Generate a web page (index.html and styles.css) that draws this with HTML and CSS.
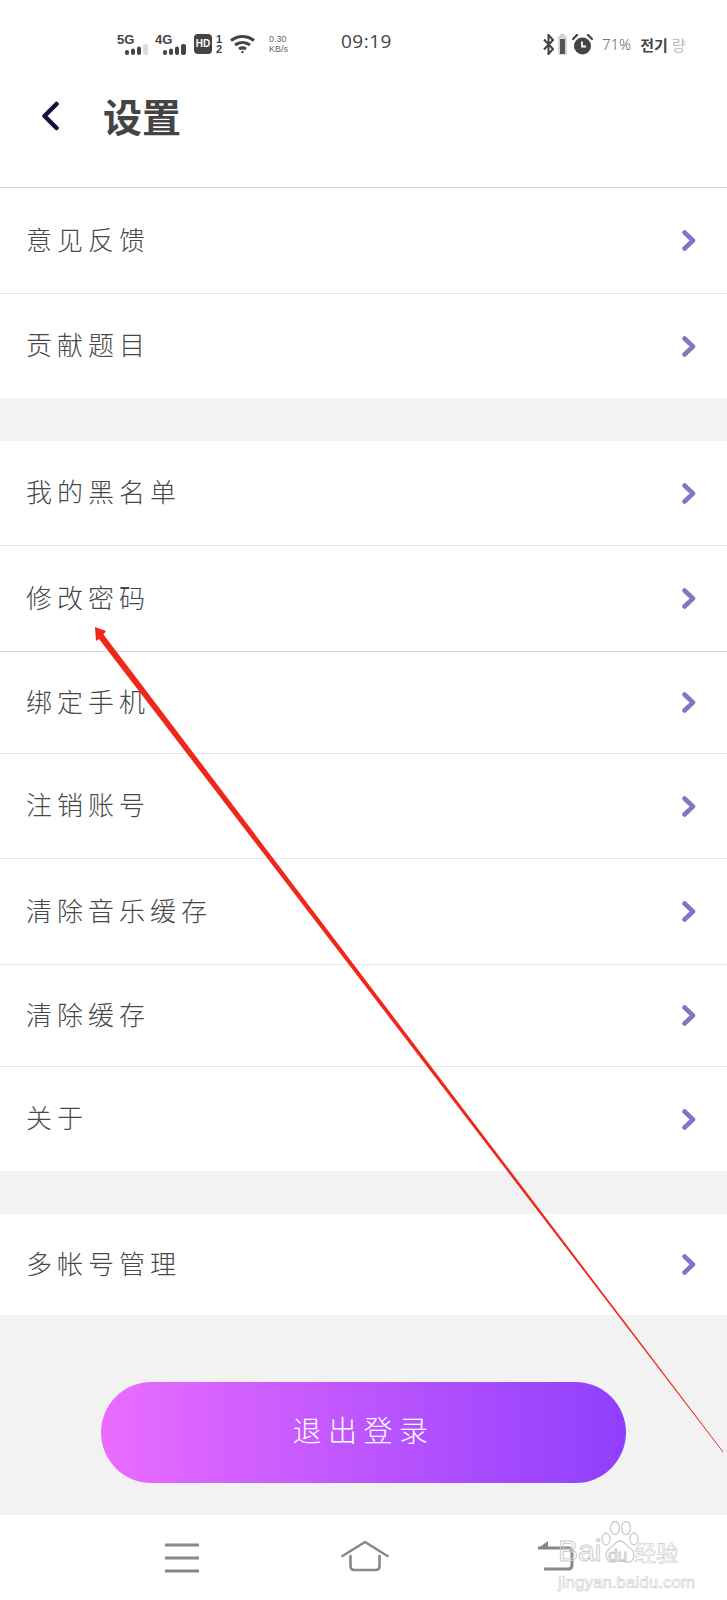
FILE: index.html
```html
<!DOCTYPE html>
<html lang="zh-CN">
<head>
    <meta charset="UTF-8">
    <meta name="viewport" content="width=device-width, initial-scale=1.0">
    <title>设置</title>
    <link rel="stylesheet" href="styles.css">
</head>
<body>
<div class="page">
    <div class="header">
        <div class="status">
            <div class="sig">
                <span class="sig-name">5G</span>
                <svg width="24" height="11" viewBox="0 0 24 11"><g fill="#444"><rect x="0" y="6" width="4" height="5" rx="2"/><rect x="6" y="4.5" width="4" height="6.500" rx="2"/><rect x="12" y="2.500" width="4" height="8.500" rx="2"/></g><rect x="18" y="0" width="5" height="11" rx="2" fill="#ddd"/></svg>
            </div>
            <div class="sig sig-4g">
                <span class="sig-name">4G</span>
                <svg width="24" height="11" viewBox="0 0 24 11"><g fill="#444"><rect x="0" y="6" width="4" height="5" rx="2"/><rect x="6" y="4.500" width="4" height="6.500" rx="2"/><rect x="12" y="2.500" width="4" height="8.500" rx="2"/><rect x="18" y="0" width="5" height="11" rx="2"/></g></svg>
            </div>
            <span class="hd">HD</span>
            <span class="sim"><span>1</span><span>2</span></span>
            <svg class="wifi" width="25" height="20" viewBox="0 0 25 20" fill="none" stroke="#444" stroke-width="3"><path d="M1 6.500C8 1 17 1 24 6.500"/><path d="M5 11c4.500-3.500 10.500-3.500 15 0"/><path d="M9 15c2-1.300 5-1.300 7 0"/><circle cx="12.500" cy="18" r="1.200" fill="#444" stroke="none"/></svg>
            <span class="speed"><span>0.30</span><span>KB/s</span></span>
            <span class="time">09:19</span>
            <svg class="bt" width="11" height="21" viewBox="0 0 11 21" fill="none" stroke="#444" stroke-width="2"><path d="M1 5.500l9 9.500-4.500 5V1L10 6 1 15.500"/></svg>
            <svg class="batt" width="9" height="21" viewBox="0 0 9 21"><rect x="2.500" y="0" width="4" height="2" fill="#ccc"/><rect x="0" y="2" width="9" height="19" rx="1" fill="#d8d8d8"/><rect x="2" y="5" width="5" height="15" fill="#555"/></svg>
            <svg class="alarm" width="21" height="21" viewBox="0 0 21 21"><circle cx="10.500" cy="12" r="8.500" fill="#444"/><path d="M1 5l4-4M20 5l-4-4" stroke="#444" stroke-width="2.200" stroke-linecap="round"/><path d="M10 7.500v5h4" fill="none" stroke="#fff" stroke-width="1.800"/></svg>
            <span class="batt-text">71%</span>
            <span class="carrier">전기<span class="carrier-dim">량</span></span>
        </div>
        <div class="titlebar">
            <svg class="back" width="18" height="30" viewBox="0 0 18 30" fill="none" stroke="#170f3f" stroke-width="4.500" stroke-linecap="round" stroke-linejoin="round"><path d="M15.500 3L3.500 15l12 12"/></svg>
            <h1 class="title">设置</h1>
        </div>
    </div>

    <div class="group">
        <div class="row row-106"><span>意见反馈</span><svg class="chev" width="14" height="21" viewBox="0 0 14 21"><path d="M2.500 2.500l8.500 8-8.500 8" /></svg></div>
        <div class="row row-104"><span>贡献题目</span><svg class="chev" width="14" height="21" viewBox="0 0 14 21"><path d="M2.500 2.500l8.500 8-8.500 8" /></svg></div>
    </div>
    <div class="group">
        <div class="row row-105"><span>我的黑名单</span><svg class="chev" width="14" height="21" viewBox="0 0 14 21"><path d="M2.500 2.500l8.500 8-8.500 8" /></svg></div>
        <div class="row row-106 row-dark"><span>修改密码</span><svg class="chev" width="14" height="21" viewBox="0 0 14 21"><path d="M2.500 2.500l8.500 8-8.500 8" /></svg></div>
        <div class="row row-102"><span>绑定手机</span><svg class="chev" width="14" height="21" viewBox="0 0 14 21"><path d="M2.500 2.500l8.500 8-8.500 8" /></svg></div>
        <div class="row row-105"><span>注销账号</span><svg class="chev" width="14" height="21" viewBox="0 0 14 21"><path d="M2.500 2.500l8.500 8-8.500 8" /></svg></div>
        <div class="row row-106"><span>清除音乐缓存</span><svg class="chev" width="14" height="21" viewBox="0 0 14 21"><path d="M2.500 2.500l8.500 8-8.500 8" /></svg></div>
        <div class="row row-102"><span>清除缓存</span><svg class="chev" width="14" height="21" viewBox="0 0 14 21"><path d="M2.500 2.500l8.500 8-8.500 8" /></svg></div>
        <div class="row row-104"><span>关于</span><svg class="chev" width="14" height="21" viewBox="0 0 14 21"><path d="M2.500 2.500l8.500 8-8.500 8" /></svg></div>
    </div>
    <div class="group group-last">
        <div class="row row-101"><span>多帐号管理</span><svg class="chev" width="14" height="21" viewBox="0 0 14 21"><path d="M2.500 2.500l8.500 8-8.500 8" /></svg></div>
    </div>

    <div class="logout-wrap">
        <button class="logout">退出登录</button>
    </div>

    <div class="navbar">
        <svg class="nav-menu" width="34" height="30" viewBox="0 0 34 30" fill="none" stroke="#888" stroke-width="3"><path d="M0 2h34M0 15h34M0 28h34"/></svg>
        <svg class="nav-home" width="48" height="32" viewBox="0 0 48 32" fill="none" stroke="#888" stroke-width="2.600" stroke-linecap="round" stroke-linejoin="round"><path d="M1.500 16L24 2l22.500 14"/><path d="M9.500 16v10q0 4 4 4h21q4 0 4-4V16"/></svg>
        <svg class="nav-back" width="36" height="32" viewBox="0 0 36 32" fill="none" stroke="#888" stroke-width="3"><path d="M0 8h30q4 0 4 4v13q0 4-4 4H6"/><path d="M1 7.500L10 1v7z" fill="#888" stroke="none"/></svg>
    </div>

    <!-- red annotation arrow on top of the list -->
    <svg class="arrow" width="727" height="1600" viewBox="0 0 727 1600"><polygon points="95,627 106,631 103.500,634.500 723.500,1452 723,1452.500 99,639 96,641" fill="#f0281c"/></svg>

    <div class="watermark">
        <svg class="paw" width="40" height="46" viewBox="0 0 40 46" fill="none" stroke="#ccc" stroke-width="1.300"><ellipse cx="6" cy="18" rx="4" ry="6"/><ellipse cx="15" cy="7" rx="4.500" ry="6.500"/><ellipse cx="26" cy="7" rx="4.500" ry="6.500"/><ellipse cx="34" cy="18" rx="4" ry="6"/><path d="M20 20c-5 0-6 5-11 8-5 4-3 14 4 13 3 0 5-1 7-1s4 1 7 1c7 1 9-9 4-13-5-3-6-8-11-8z"/></svg>
        <div class="wm-main"><span>Bai</span><span class="wm-du">du</span><span class="wm-cn">经验</span></div>
        <div class="wm-url">jingyan.baidu.com</div>
    </div>
</div>
</body>
</html>
```

FILE: styles.css
```css
body {
    margin: 0;
    padding: 0;
    font-family: "Noto Sans CJK SC", "Liberation Sans", sans-serif;
}
.page {
    position: relative;
    width: 727px;
    height: 1600px;
    overflow: hidden;
    background-color: #f2f2f2;
    display: flex;
    flex-direction: column;
}

/* status bar + title */
.header {
    background-color: #fff;
    border-bottom: 1px solid #d8d8d8;
    height: 187px;
}
.status {
    display: flex;
    align-items: center;
    height: 88px;
    padding-left: 117px;
    color: #444;
}
.sig {
    display: flex;
    flex-direction: column;
    width: 32px;
    height: 21px;
}
.sig svg {
    align-self: flex-end;
    margin-top: -1px;
}
.sig-4g {
    margin-left: 6px;
}
.sig-name {
    font-family: "Liberation Sans", sans-serif;
    font-size: 13px;
    font-weight: bold;
    line-height: 11px;
}
.hd {
    margin-left: 7px;
    width: 18px;
    height: 20px;
    border-radius: 4px;
    background-color: #444;
    color: #fff;
    font-family: "Liberation Sans", sans-serif;
    font-size: 10px;
    font-weight: bold;
    line-height: 20px;
    text-align: center;
}
.sim {
    display: flex;
    flex-direction: column;
    width: 8px;
    margin-left: 3px;
    font-family: "Liberation Sans", sans-serif;
    font-size: 11px;
    font-weight: bold;
    line-height: 10px;
    text-align: center;
}
.wifi {
    margin-left: 7px;
}
.speed {
    display: flex;
    flex-direction: column;
    margin-left: 14px;
    width: 22px;
    font-family: "Liberation Sans", sans-serif;
    font-size: 9px;
    line-height: 10px;
    color: #666;
}
.time {
    margin-left: 50px;
    width: 52px;
    font-family: "Open Sans", sans-serif;
    font-size: 19px;
    letter-spacing: 0.5px;
    margin-top: -6px;
}
.bt {
    margin-left: 150px;
}
.batt {
    margin-left: 4px;
}
.alarm {
    margin-left: 5px;
}
.batt-text {
    margin-left: 9px;
    font-family: "Open Sans", sans-serif;
    font-size: 15px;
    font-weight: 300;
    color: #555;
}
.carrier {
    margin-left: 9px;
    font-family: "Noto Sans CJK KR", sans-serif;
    font-size: 15px;
    font-weight: bold;
}
.carrier-dim {
    color: #bbb;
    font-weight: normal;
    margin-left: 4px;
}
.titlebar {
    display: flex;
    align-items: center;
    height: 60px;
    padding-left: 41px;
}
.back {
    margin-bottom: 4px;
}
.title {
    margin: 0 0 6px 44px;
    font-size: 39px;
    font-weight: bold;
    color: #444;
    line-height: 60px;
}

/* settings list */
.group {
    background-color: #fff;
    margin-bottom: 43px;
}
.group-last {
    margin-bottom: 0;
}
.row {
    display: flex;
    align-items: center;
    justify-content: space-between;
    box-sizing: border-box;
    padding: 0 31px 0 26px;
    border-bottom: 1px solid #e6e6e6;
    color: #484848;
    font-size: 26px;
    font-weight: 300;
    letter-spacing: 5px;
}
.row span {
    margin-bottom: 5px;
}
.row:last-child {
    border-bottom: none;
}
.row-dark {
    border-bottom-color: #d4d4d4;
}
.row-101 { height: 101px; }
.row-102 { height: 102px; }
.row-104 { height: 104px; }
.row-105 { height: 105px; }
.row-106 { height: 106px; }
.chev {
    fill: none;
    stroke: #8873c2;
    stroke-width: 4.5;
    stroke-linecap: round;
    stroke-linejoin: round;
}

/* logout */
.logout-wrap {
    flex: 1;
    padding: 67px 101px 0;
}
.logout {
    display: block;
    width: 525px;
    height: 101px;
    padding: 0 0 8px;
    border: none;
    border-radius: 51px;
    background: linear-gradient(90deg, #ea6cff, #8f3ffd);
    color: #fff;
    font-family: inherit;
    font-size: 29px;
    font-weight: 300;
    letter-spacing: 6.5px;
}

/* bottom nav */
.navbar {
    display: flex;
    align-items: center;
    height: 85px;
    padding-left: 165px;
    background-color: #fff;
}
.nav-home {
    margin-left: 142px;
    margin-bottom: 4px;
}
.nav-back {
    margin-left: 149px;
    margin-bottom: 4px;
}

/* overlays */
.arrow {
    position: absolute;
    left: 0;
    top: 0;
    pointer-events: none;
}
.watermark {
    position: absolute;
    left: 558px;
    top: 1521px;
    width: 130px;
    color: #ccc;
    font-family: "Liberation Sans", sans-serif;
}
.paw {
    position: absolute;
    left: 42px;
    top: 0;
}
.wm-main {
    display: flex;
    align-items: baseline;
    margin-top: 13px;
    font-size: 30px;
    line-height: 34px;
    color: transparent;
    -webkit-text-stroke: 1px #ccc;
}
.wm-du {
    margin-left: 7px;
    font-size: 17px;
}
.wm-cn {
    margin-left: 7px;
    font-family: "Noto Sans CJK SC", sans-serif;
    font-size: 22px;
    -webkit-text-stroke: 0.6px #ccc;
}
.wm-url {
    font-size: 17px;
    line-height: 20px;
    color: transparent;
    -webkit-text-stroke: 0.6px #ccc;
    white-space: nowrap;
}
```
